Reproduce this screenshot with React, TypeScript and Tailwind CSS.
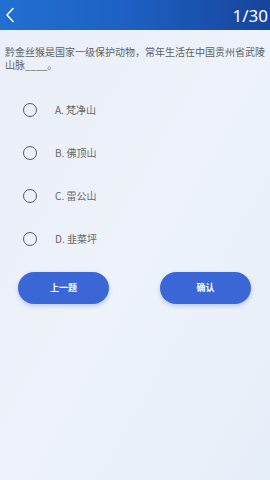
import React from 'react';

const OPTIONS = ['A. 梵净山', 'B. 佛顶山', 'C. 雷公山', 'D. 韭菜坪'];

const FONT = { fontFamily: '"Noto Sans CJK SC", "Noto Sans", sans-serif' };

export default function App() {
  return (
    <div
      className="w-[270px] h-[480px] flex flex-col bg-gradient-to-br from-[#e9eef8] via-[#eef3fa] to-[#e6eef9] overflow-hidden"
      style={FONT}
    >
      {/* Header */}
      <div className="h-[30px] flex items-center justify-between pl-[4px] pr-[2px] bg-gradient-to-r from-[#2170d2] via-[#1d5fc0] to-[#17449c]">
        <svg width="12" height="18" viewBox="0 0 12 18" fill="none">
          <path d="M9 2.5 L3 9 L9 15.5" stroke="white" strokeWidth="1.6" strokeLinecap="round" strokeLinejoin="round" />
        </svg>
        <span className="text-white text-[17px] leading-none" style={{ fontFamily: '"Noto Sans", sans-serif' }}>1/30</span>
      </div>

      {/* Question */}
      <p className="px-[5px] mt-[15px] text-[10px] leading-[13px] text-[#5f5f5f]">
        黔金丝猴是国家一级保护动物，常年生活在中国贵州省武陵山脉____。
      </p>

      {/* Options */}
      <div className="flex flex-col mt-[31px] gap-[28px]">
        {OPTIONS.map((opt) => (
          <div key={opt} className="flex items-center h-[15px] pl-[23px]">
            <span className="w-[14px] h-[14px] rounded-full border-[1.6px] border-[#5a5a5a]" />
            <span className="ml-[18px] text-[10px] text-[#666]">{opt}</span>
          </div>
        ))}
      </div>

      {/* Buttons */}
      <div className="flex justify-between px-[18px] mt-[26px]">
        <button className="w-[91px] h-[32px] rounded-full bg-[#3b67d6] text-white text-[9px] font-bold shadow-[0_2px_4px_rgba(40,80,180,0.25)]">
          上一题
        </button>
        <button className="w-[91px] h-[32px] mr-[1px] rounded-full bg-[#3b67d6] text-white text-[9px] font-bold shadow-[0_2px_4px_rgba(40,80,180,0.25)]">
          确认
        </button>
      </div>
    </div>
  );
}
